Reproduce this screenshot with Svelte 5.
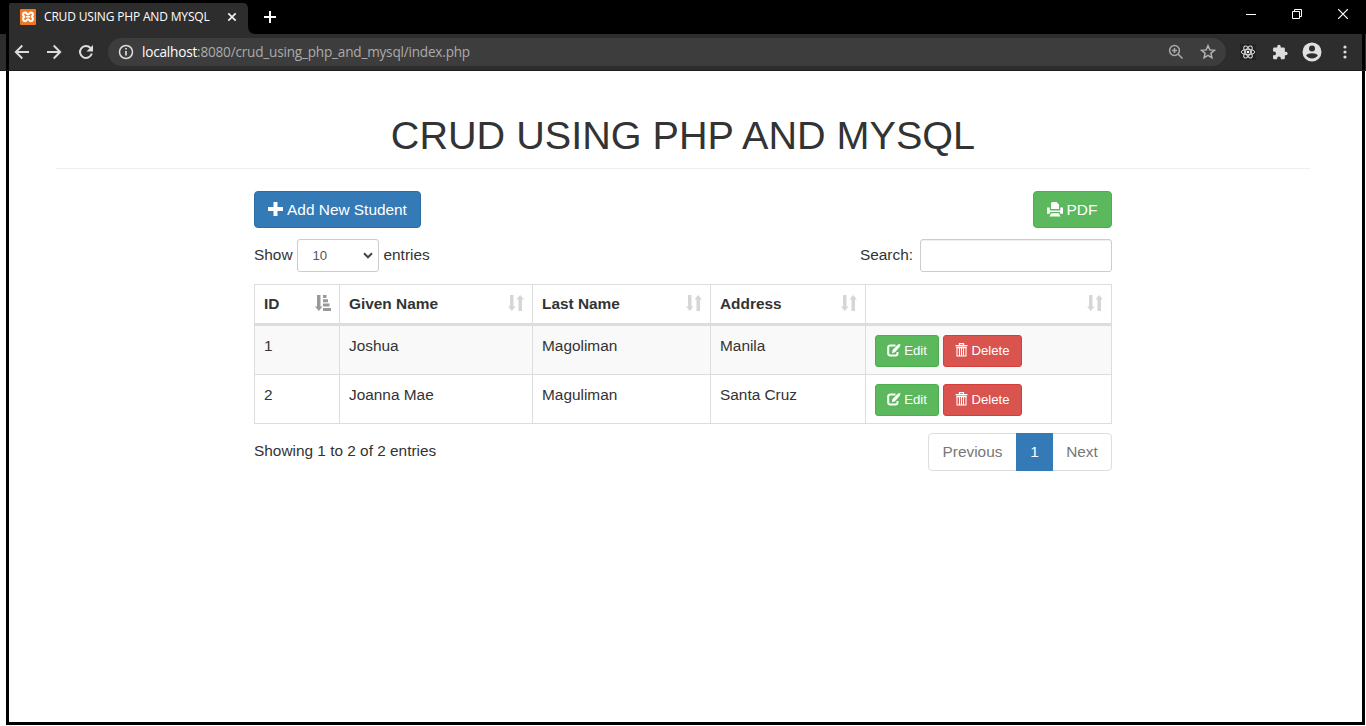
<script>
  const headings = ['ID', 'Given Name', 'Last Name', 'Address', ''];
  const students = [
    [1, 'Joshua', 'Magoliman', 'Manila'],
    [2, 'Joanna Mae', 'Maguliman', 'Santa Cruz']
  ];
</script>

<div class="window">
  <header>
    <div class="tabs">
      <div class="edge"></div>
      <div class="tab">
        <svg class="fav" width="16" height="16" viewBox="0 0 16 16"><rect width="16" height="16" rx="1" fill="#f37623"/><path d="M5.200 3.500c-2.800 0-2.800 4.200 0 4.300-2.800.1-2.800 4.400 0 4.400 1.400 0 1.600-2 2.800-2s1.400 2 2.800 2c2.800 0 2.800-4.300 0-4.400 2.800-.1 2.800-4.300 0-4.300C9.400 3.500 9.200 5.500 8 5.500S6.600 3.500 5.200 3.500Z" fill="none" stroke="#fff" stroke-width="2"/><path d="M6 7.800h4" stroke="#fff" stroke-width="1.500"/></svg>
        <span class="title">CRUD USING PHP AND MYSQL</span>
        <svg class="close" width="10" height="10" viewBox="0 0 10 10"><path d="m1.300 1.300 7.400 7.400m0-7.400-7.400 7.400" stroke="#eee" stroke-width="1.700"/></svg>
      </div>
      <svg class="curve" width="8" height="8"><path d="M0 0Q0 8 8 8H0Z" fill="#2d2d2d"/></svg>
      <svg class="plus" width="12" height="12"><path d="M6 0v12M0 6h12" stroke="#fff" stroke-width="2"/></svg>
      <div class="controls">
        <svg width="10" height="10"><path d="M0 5.500h10" stroke="#fff"/></svg>
        <svg width="10" height="10"><path d="M.5 2.500h7v7h-7ZM2.500 2.500v-2h7v7h-2" fill="none" stroke="#fff"/></svg>
        <svg width="10" height="10"><path d="m0 0 10 10M10 0 0 10" stroke="#fff" stroke-width="1.200"/></svg>
      </div>
    </div>
    <div class="toolbar">
      <svg class="nav" width="16" height="16" viewBox="0 0 16 16"><path d="M15 8H2M8.300 1.500 1.800 8l6.500 6.500" fill="none" stroke="#ddd" stroke-width="1.900"/></svg>
      <svg class="nav" width="16" height="16" viewBox="0 0 16 16"><path d="M1 8h13M7.700 1.500 14.200 8l-6.500 6.500" fill="none" stroke="#ddd" stroke-width="1.900"/></svg>
      <svg class="nav" width="16" height="16" viewBox="0 0 16 16"><path d="M13.800 9.500A6 6 0 1 1 12.500 4" fill="none" stroke="#ddd" stroke-width="2"/><path d="M15 1v6.500H8.500Z" fill="#ddd"/></svg>
      <div class="address">
        <svg width="16" height="16" viewBox="0 0 16 16"><circle cx="8" cy="8" r="6.500" fill="none" stroke="#ddd" stroke-width="1.500"/><path d="M8 7v4.500M8 4v1.600" stroke="#ddd" stroke-width="1.700"/></svg>
        <span class="url"><b>localhost</b>:8080/crud_using_php_and_mysql/index.php</span>
        <svg class="zoom" width="16" height="16" viewBox="0 0 16 16"><circle cx="6.500" cy="6.500" r="4.900" fill="none" stroke="#aaa" stroke-width="1.500"/><path d="m10 10 4.500 4.500M4 6.500h5M6.500 4v5" stroke="#aaa" stroke-width="1.500"/></svg>
        <svg width="16" height="16" viewBox="0 0 16 16"><path d="m8 1.700 1.800 4.200 4.600.4-3.500 3 1 4.500L8 11.400l-3.900 2.400 1-4.500-3.500-3 4.600-.4Z" fill="none" stroke="#b4b4b4" stroke-width="1.500"/></svg>
      </div>
      <svg class="react" width="16" height="16" viewBox="0 0 16 16"><rect width="16" height="16" fill="#242424"/><g fill="none" stroke="#ddd" stroke-width="1"><ellipse cx="8" cy="8" rx="6.700" ry="2.700"/><ellipse cx="8" cy="8" rx="6.700" ry="2.700" transform="rotate(60 8 8)"/><ellipse cx="8" cy="8" rx="6.700" ry="2.700" transform="rotate(120 8 8)"/></g><circle cx="8" cy="8" r="1.300" fill="#fff"/></svg>
      <svg class="puzzle" width="16" height="16" viewBox="1 0 22 23"><path fill="#ddd" d="M20.500 11H19V7a2 2 0 0 0-2-2h-4V3.500a2.500 2.500 0 0 0-5 0V5H4a2 2 0 0 0-2 2v3.800h1.500a2.700 2.700 0 0 1 0 5.400H2V20c0 1.100.9 2 2 2h3.800v-1.500a2.700 2.700 0 0 1 5.400 0V22H17a2 2 0 0 0 2-2v-4h1.500a2.500 2.500 0 0 0 0-5Z"/></svg>
      <svg class="user" width="20" height="20" viewBox="0 0 20 20"><circle cx="10" cy="10" r="9.500" fill="#e0e0e0"/><circle cx="10" cy="6.500" r="3" fill="#2d2d2d"/><path d="M4.200 13.500c1.200-3 10.400-3 11.600 0a7 7 0 0 1-11.600 0Z" fill="#2d2d2d"/></svg>
      <svg class="dots" width="4" height="14"><g fill="#ddd"><circle cx="2" cy="2" r="1.600"/><circle cx="2" cy="7" r="1.600"/><circle cx="2" cy="12" r="1.600"/></g></svg>
    </div>
  </header>

  <main>
    <h1><span>CRUD USING PHP AND MYSQL</span></h1>
    <section>
      <div class="row actions">
        <button class="blue"><svg width="15" height="15" viewBox="0 0 15 15"><path d="M5.500 0h4v5H15v4H9.500v5h-4V9H0V5h5.500Z" fill="#fff"/></svg><span>Add New Student</span></button>
        <button class="green"><svg width="16" height="16" viewBox="0 0 16 16"><path fill="#fff" d="M5 0h4.500L12 2.500V7H4V1ZM0 5.500h2.700v3h10.600v-3H16v6.200h-2.600L12.800 10H3.200l-.6 1.700H0ZM4 11.300h8l1.500 3.200H2.500Z"/></svg><span>PDF</span></button>
      </div>
      <div class="row filters">
        <div class="length"><span class="caption">Show</span><span class="select">10<svg width="10" height="7" viewBox="0 0 10 7"><path d="m1 1.300 4 4 4-4" fill="none" stroke="#444" stroke-width="2"/></svg></span><span class="caption entries">entries</span></div>
        <label><span class="caption">Search:</span><input /></label>
      </div>
      <table>
        <colgroup><col style="width:85px"><col style="width:193px"><col style="width:178px"><col style="width:155px"><col style="width:246px"></colgroup>
        <thead>
          <tr>
            {#each headings as heading, i}
              <th><div><span>{heading}</span>
                {#if i === 0}
                  <svg width="16" height="16" viewBox="0 0 16 16"><path d="M2 0h3.500v11.500h2L3.800 16 0 11.500h2ZM8 0h3.500v3H8Zm0 4.300h5v3H8Zm0 4.300h6.500v3H8ZM8 13h8v3H8Z" fill="#999"/></svg>
                {:else}
                  <svg width="16" height="16" viewBox="0 0 16 16"><path d="M2 0h3.500v11.500h2L3.800 16 0 11.500h2Zm8.500 16H14V4.500h2L12.200 0 8.500 4.500h2Z" fill="#d6d6d6"/></svg>
                {/if}
              </div></th>
            {/each}
          </tr>
        </thead>
        <tbody>
          {#each students as student}
            <tr>
              {#each student as value}<td>{value}</td>{/each}
              <td class="commands"><div>
                <button class="green small"><svg width="14" height="13" viewBox="0 0 14 13"><path d="M8.500 1.500H3.500Q1.200 1.500 1.200 3.500v6q0 2 2.300 2H8.500q2 0 2-2V8" fill="none" stroke="#fff" stroke-width="2"/><path d="m5 9.200.5-3.200L11 .5 13.500 0l-.7 2.800L8 8.200Z" fill="#fff"/></svg><span>Edit</span></button>
                <button class="red small"><svg width="13" height="14" viewBox="0 0 13 14"><path d="M4.500 2V.7h4V2M.5 2.700h12M1.500 4.500h10" fill="none" stroke="#fff" stroke-width="1.300"/><path d="M2 4v9h9V4M4.500 5v7.500M6.500 5v7.500M8.500 5v7.500" fill="none" stroke="#fff" stroke-width="1.100"/></svg><span>Delete</span></button>
              </div></td>
            </tr>
          {/each}
        </tbody>
      </table>
      <div class="row footer">
        <p>Showing 1 to 2 of 2 entries</p>
        <nav><span class="previous">Previous</span><span class="current">1</span><span class="next">Next</span></nav>
      </div>
    </section>
  </main>
</div>

<style>
  :global(body) { margin: 0; background: #fff; overflow: hidden; }
  * { box-sizing: border-box; }
  svg { display: block; flex: none; }
  .window { width: 1366px; height: 726px; display: flex; flex-direction: column; background: #fff; font-family: "Liberation Sans", Arial, sans-serif; font-size: 15.4px; color: #333; }
  header { height: 71px; flex: none; background: linear-gradient(90deg, transparent 6px, #000 6px 9px, transparent 9px 1362px, #000 1362px 1365px, transparent 1365px), #2d2d2d; border-bottom: 1px solid #1d1d1d; font-family: "Open Sans", sans-serif; }
  .tabs { height: 34px; display: flex; background: #000; align-items: flex-end; }
  .edge { width: 9px; height: 34px; background: #000; }
  .tab { width: 239px; height: 31px; background: #2d2d2d; border-radius: 2px 5px 0 0; display: flex; align-items: center; padding: 0 11px 3px; }
  .title { width: 171px; margin-left: 8px; padding-bottom: 1px; white-space: nowrap; font-size: 12px; letter-spacing: -.17px; color: #fff; }
  .close { margin-left: 12px; }
  .plus { margin: 0 0 11px 8px; }
  .controls { display: flex; gap: 36px; margin: 0 18px 15px auto; }
  .toolbar { height: 36px; display: flex; align-items: center; padding-left: 14px; }
  .nav { margin-right: 16px; }
  .address { width: 1118px; height: 28px; margin-left: -2px; padding: 0 10px; border-radius: 14px; background: #3d3d3d; display: flex; align-items: center; }
  .url { margin-left: 8px; padding-bottom: 1px; font-size: 13.6px; letter-spacing: -.21px; color: #ababab; white-space: nowrap; }
  .url b { font-weight: 400; color: #fff; }
  .zoom { margin: 0 16px 0 auto; }
  .react { margin-left: 14px; }
  .puzzle { margin-left: 16px; }
  .user { margin-left: 14px; }
  .dots { margin-left: 21px; }
  main { width: 1359px; height: 654px; margin-left: 6px; border: solid #000; border-width: 0 3px 3px; padding: 42px 52px 0 47px; }
  h1 { margin: 0; height: 56px; border-bottom: 1px solid #eee; font-size: 39.6px; line-height: 44px; font-weight: 400; text-align: center; }
  h1 span { white-space: nowrap; }
  section { width: 858px; margin: 22px 0 0 198px; }
  .row { display: flex; justify-content: space-between; align-items: center; }
  .actions { height: 37px; margin-bottom: 11px; }
  button { display: flex; align-items: center; justify-content: center; gap: 4px; height: 37px; border: 1px solid; border-radius: 4px; padding: 0; font: 15.4px "Liberation Sans", Arial, sans-serif; color: #fff; }
  .blue { width: 167px; background: #337ab7; border-color: #2e6da4; }
  .green { width: 79px; background: #5cb85c; border-color: #4cae4c; }
  .green:not(.small) { padding-right: 1px; }
  .red { background: #d9534f; border-color: #d43f3a; }
  .small { height: 32px; width: 64px; padding-bottom: 2px; font-size: 13.2px; gap: 3px; border-radius: 3px; }
  .red.small { width: 79px; }
  .filters { height: 33px; }
  .length { display: flex; align-items: center; gap: 4px; height: 33px; }
  .caption { padding-bottom: 2px; }
  .entries { margin-left: 1px; }
  .select { width: 82px; height: 33px; display: flex; align-items: center; justify-content: space-between; border: 1px solid #ccc; border-radius: 3px; padding: 0 5px 0 15px; font-size: 13.2px; color: #555; }
  label { display: flex; align-items: center; gap: 7px; }
  input { width: 192px; height: 33px; border: 1px solid #ccc; border-radius: 3px; box-shadow: inset 0 1px 1px #0001; background: #fff; }
  table { width: 858px; table-layout: fixed; border-collapse: collapse; margin-top: 12px; }
  th, td { border: 1px solid #ddd; padding: 0 9px; text-align: left; line-height: 22px; }
  th { border-bottom-width: 3px; height: 40px; padding-right: 8px; }
  th div { height: 37px; display: flex; align-items: center; justify-content: space-between; }
  th svg { margin-bottom: 2px; }
  td { height: 49px; vertical-align: top; padding-top: 9px; }
  tbody tr:first-child td { height: 50px; }
  tbody tr:nth-child(odd) { background: #f9f9f9; }
  .commands div { display: flex; gap: 4px; }
  .footer { height: 38px; margin-top: 9px; }
  p { margin: 0 0 3px; }
  nav { width: 184px; height: 38px; border: 1px solid #ddd; border-radius: 4px; display: flex; color: #777; }
  nav span { display: flex; align-items: center; justify-content: center; }
  .previous { width: 87px; }
  .current { width: 37px; margin: -1px 0; color: #fff; background: #337ab7; }
  .next { width: 58px; }
</style>
